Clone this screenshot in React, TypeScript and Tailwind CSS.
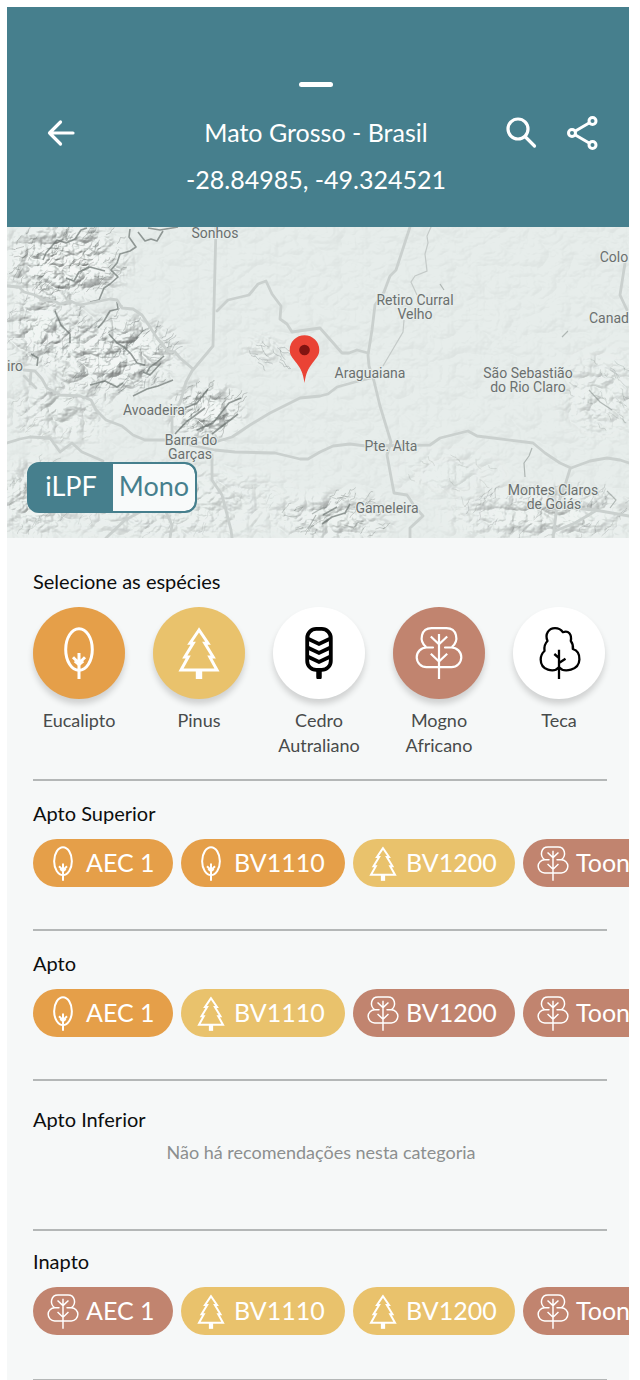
import type { ReactNode } from 'react';

type Species = 'eucalipto' | 'pinus' | 'cedro' | 'mogno' | 'teca';

const drawings: Record<Species, ReactNode> = {
  eucalipto: (
    <g strokeWidth="3">
      <ellipse cx="24" cy="22.500" rx="13.300" ry="20.800" />
      <path d="M24 26v26M18 30.200 24 36.200 30 30.200" />
      <path d="m19.500 34.500 4.500 3.700 4.500-3.700" strokeWidth="2" />
    </g>
  ),
  pinus: (
    <g strokeWidth="3">
      <path d="M24 3 15 16.200h3.200L9.800 30h3.400L6 43h36l-7.200-13h3.400l-8.400-13.800H33Z" />
      <path d="M20.800 43h6.400v9h-6.400z" fill="currentColor" stroke="none" />
    </g>
  ),
  cedro: (
    <g strokeWidth="3.800">
      <rect x="12.200" y="1.900" width="23.600" height="41" rx="9" />
      <path d="m12.500 11.500 11.500 5.500 11.500-5.500M12.500 20.500 24 26l11.500-5.500M12.500 29.500 24 35l11.500-5.500" />
      <path d="M24 44v6" strokeWidth="5.500" strokeLinecap="round" />
    </g>
  ),
  mogno: (
    <g strokeWidth="2.200">
      <path d="M18 20.500h-6.500a9.800 9.800 0 0 0 0 19.600h25a9.800 9.800 0 0 0 0-19.600H30" strokeLinecap="round" />
      <path d="M11.200 20.200C3.500 14 6 1.100 16.500 1.100h15c10.500 0 13 12.900 5.300 19.100" />
      <path d="M24 7v45M15.800 9.500 24 17.200l8.200-7.700M15.800 26.800 24 34.500l8.200-7.700" />
    </g>
  ),
  teca: (
    <g strokeWidth="2.300" strokeLinejoin="round">
      <path d="M24 40.200C19 46 5.700 43.500 5.700 32.500c0-4 1.500-6.500 3.800-8.500-.6-5 .4-7.500 3-10C9.500 7 14 1.200 20 1.200c3.500 0 6 1.300 7.800 4C33.500 3 37 7 35.800 14c2 2.500 2.500 5 2 8 5 1.500 6.800 6 6.600 10.500C44 43.500 29 46 24 40.200Z" />
      <path d="M24 22.700V52M19.300 27l4.700 4M30.500 31.800 24 36" />
    </g>
  ),
};

function TreeIcon({ kind, className }: { kind: Species; className: string }) {
  return (
    <svg viewBox="0 0 48 52" className={className} fill="none" stroke="currentColor" aria-hidden="true">
      {drawings[kind]}
    </svg>
  );
}

const tone: Record<Species, string> = {
  eucalipto: 'bg-[#e59f49] text-white',
  pinus: 'bg-[#e9c26c] text-white',
  cedro: 'bg-white text-black',
  mogno: 'bg-[#c1846f] text-white',
  teca: 'bg-white text-black',
};

const species: { kind: Species; label: string }[] = [
  { kind: 'eucalipto', label: 'Eucalipto' },
  { kind: 'pinus', label: 'Pinus' },
  { kind: 'cedro', label: 'Cedro Autraliano' },
  { kind: 'mogno', label: 'Mogno Africano' },
  { kind: 'teca', label: 'Teca' },
];

const names = ['AEC 1', 'BV1110', 'BV1200', 'Toona'];

const groups: { title: string; kinds: Species[]; pad: string }[] = [
  { title: 'Apto Superior', kinds: ['eucalipto', 'eucalipto', 'pinus', 'mogno'], pad: 'pt-[18px]' },
  { title: 'Apto', kinds: ['eucalipto', 'pinus', 'mogno', 'mogno'], pad: 'pt-[18px]' },
  { title: 'Apto Inferior', kinds: [], pad: 'pt-6' },
  { title: 'Inapto', kinds: ['mogno', 'pinus', 'pinus', 'mogno'], pad: 'pt-4' },
];

const roads = [
  'M7 286 19 287 24 292 35 295 43 300 52 300 60 304 70 301 80 305 110 299 117 300 122 308 133 309 142 315 150 327 157 338 167 350 175 352 180 358 193 369',
  'M216 227 213 346 192 371 186 382 180 403 172 414 172 436',
  'M217 311 228 300 249 295 258 284 266 281 272 294 281 306 280 319 287 324 292 332 320 328 342 353 349 353 357 350 368 353',
  'M410 227 396 270 390 276 384 292 375 305 372 330 368 355 369 366 374 381 380 406 391 442 387 455 394 493 407 495 415 507 423 516 410 528 410 538',
  'M24 370 35 371 42 379 47 388 60 395 80 396 91 400 96 410 106 420 122 426 133 435 145 440 165 440 215 450 235 452 275 453 300 459 308 459 320 452 333 446 350 444 366 446 430 445 440 438 468 431 477 436 533 443 545 453 560 463 571 468 590 461 607 458 620 460 629 463',
  'M215 442 232 437 250 425 270 413 300 398 320 396 328 394 337 387 355 382 371 378',
  'M7 443 20 439 30 437 50 438 60 452 72 443 82 452 103 461',
  'M212 455 212 480 222 495 231 530 232 538',
  'M625 263 620 295 627 310',
  'M570 469 566 482 557 507 553 538M557 507 595 510 629 516M597 510 575 523 555 531',
  'M106 538 125 520 140 512M166 512 172 525 170 538',
  'M24 376 36 388M31 372 30 384',
];

const ridges = [
  'M43 260 46 253 52 246 57 240 66 243 75 239 81 230 87 228',
  'M130 229 129 237 136 247 130 251 120 254 117 263 111 270 118 277 110 284 104 288 99 300 90 302',
  'M138 232 145 241 151 239 157 241 163 231M148 228 160 230 178 227',
  'M117 302 118 309 110 311 104 321 98 328',
  'M109 334 117 343 124 347 131 354 137 363 145 365',
  'M164 356 156 363 150 367 146 374M161 363 150 375 143 372',
  'M55 311 61 325 70 334 70 343M31 354 38 358 37 366',
  'M133 396 147 389 158 386 173 380M90 385 105 381 117 387 123 383',
  'M175 434 186 422 193 417 205 408M197 430 213 423 221 413 229 403 241 398M212 434 225 424 238 414',
  'M185 408 197 403 208 389M66 278 74 281 79 272 90 267 105 271',
  'M322 524 332 517 345 513 350 504M323 515 337 507',
];

const faintRidges = [
  'M525 477 524 463 529 456 532 448M308 529 316 515M312 514 324 507M607 491 616 500 610 508',
  'M562 337 568 331M589 390 600 402 612 410M444 290 440 284',
];

const patches = [
  { x: 65, y: 262, rx: 75, ry: 48, n: 95, tilt: -0.6, dark: 0.3, relief: 0.55 },
  { x: 42, y: 328, rx: 50, ry: 52, n: 40, tilt: -0.9, dark: 0.2, relief: 0.4 },
  { x: 115, y: 355, rx: 78, ry: 50, n: 85, tilt: -0.7, dark: 0.28, relief: 0.5 },
  { x: 60, y: 410, rx: 62, ry: 45, n: 24, tilt: -0.8, dark: 0.14, relief: 0.25 },
  { x: 206, y: 412, rx: 46, ry: 36, n: 50, tilt: -0.8, dark: 0.3, relief: 0.5 },
  { x: 35, y: 500, rx: 45, ry: 50, n: 35, tilt: -1, dark: 0.18, relief: 0.3 },
  { x: 170, y: 505, rx: 140, ry: 50, n: 30, tilt: -1, dark: 0.12, relief: 0.2 },
  { x: 265, y: 350, rx: 30, ry: 20, n: 14, tilt: 0.6, dark: 0.25, relief: 0.15 },
  { x: 335, y: 518, rx: 70, ry: 32, n: 45, tilt: -0.5, dark: 0.26, relief: 0.3 },
  { x: 450, y: 475, rx: 60, ry: 30, n: 12, tilt: 0.7, dark: 0.14, relief: 0.08 },
  { x: 545, y: 515, rx: 110, ry: 36, n: 55, tilt: -0.9, dark: 0.2, relief: 0.3 },
  { x: 600, y: 395, rx: 48, ry: 52, n: 25, tilt: 0.8, dark: 0.18, relief: 0.18 },
];

function hatch(seed: number, p: (typeof patches)[number]) {
  let s = seed * 7919 + 17;
  const rnd = () => {
    s = (s * 16807) % 2147483647;
    return s / 2147483647;
  };
  let d = '';
  for (let i = 0; i < p.n; i++) {
    const a = rnd() * Math.PI * 2;
    const r = Math.sqrt(rnd()) * 0.8;
    let x = p.x + Math.cos(a) * r * p.rx;
    let y = p.y + Math.sin(a) * r * p.ry;
    d += `M${x.toFixed(1)} ${y.toFixed(1)}`;
    for (let k = 0; k < 4; k++) {
      const t = p.tilt + (rnd() - 0.5) * 1.8;
      const len = 1 + rnd() * 4;
      x += Math.cos(t) * len;
      y += Math.sin(t) * len;
      d += `L${x.toFixed(1)} ${y.toFixed(1)}`;
    }
  }
  return d;
}

const places: [number, number, string][] = [
  [215, 238, 'Sonhos'],
  [415, 305, 'Retiro Curral'],
  [415, 319, 'Velho'],
  [370, 378, 'Araguaiana'],
  [528, 378, 'São Sebastião'],
  [528, 392, 'do Rio Claro'],
  [154, 415, 'Avoadeira'],
  [191, 445, 'Barra do'],
  [190, 459, 'Garças'],
  [391, 451, 'Pte. Alta'],
  [387, 513, 'Gameleira'],
  [553, 495, 'Montes Claros'],
  [554, 509, 'de Goiás'],
  [614, 262, 'Colo'],
  [609, 323, 'Canad'],
  [15, 371, 'iro'],
];

function RegionMap() {
  return (
    <svg viewBox="7 227 622 311" className="block w-full bg-[#e7edeb]" role="img" aria-label="Mapa da região">
      <defs>
        <filter id="relief" x="0" y="0" width="100%" height="100%" colorInterpolationFilters="sRGB">
          <feTurbulence type="turbulence" baseFrequency="0.035 0.045" numOctaves="4" seed="8" />
          <feDiffuseLighting surfaceScale="8" diffuseConstant="1.160" lightingColor="#f8fffc">
            <feDistantLight azimuth="225" elevation="62" />
          </feDiffuseLighting>
        </filter>
        <radialGradient id="fade">
          <stop offset="0.300" stopColor="#fff" />
          <stop offset="1" stopColor="#fff" stopOpacity="0" />
        </radialGradient>
        <mask id="hills" maskUnits="userSpaceOnUse" x="7" y="227" width="622" height="311" className="[mask-type:alpha]">
          <rect x="7" y="227" width="622" height="311" fill="#fff" opacity="0.040" />
          {patches.map((p, i) => (
            <ellipse key={i} cx={p.x} cy={p.y} rx={p.rx} ry={p.ry} fill="url(#fade)" opacity={p.relief} />
          ))}
        </mask>
      </defs>
      <g mask="url(#hills)">
        <rect x="7" y="227" width="622" height="311" filter="url(#relief)" />
      </g>
      <g fill="none" stroke="#4d5553" strokeWidth="0.900" strokeLinejoin="round">
        {patches.map((p, i) => (
          <path key={i} d={hatch(i + 1, p)} opacity={p.dark} />
        ))}
      </g>
      <g fill="none" stroke="#6b7371" strokeOpacity="0.700" strokeWidth="1.600" strokeLinejoin="round">
        {ridges.map((d) => (
          <path key={d} d={d} />
        ))}
      </g>
      <g fill="none" stroke="#8a9290" strokeOpacity="0.600" strokeWidth="1.200" strokeLinejoin="round">
        {faintRidges.map((d) => (
          <path key={d} d={d} />
        ))}
      </g>
      <g fill="none" stroke="#cad0ce" strokeWidth="2.800" strokeLinejoin="round" strokeLinecap="round">
        {roads.map((d) => (
          <path key={d} d={d} />
        ))}
      </g>
      <path
        d="M431 227 427 236 428 243 425 254 427 271 415 276 411 282 417 295M404 320 403 332 383 366"
        fill="none"
        stroke="#c4cac8"
        strokeWidth="1.200"
      />
      <g
        className="font-['Roboto',sans-serif] text-[14px]"
        fill="#6b706f"
        stroke="#e7edeb"
        strokeWidth="2"
        paintOrder="stroke"
        textAnchor="middle"
      >
        {places.map(([x, y, name]) => (
          <text key={name} x={x} y={y}>
            {name}
          </text>
        ))}
      </g>
      <path
        d="M304.500 383c-1.500-10-3.500-14-8-20-4-5-6.800-8-6.800-13a14.800 14.800 0 0 1 29.600 0c0 5-2.800 8-6.800 13-4.500 6-6.500 10-8 20Z"
        fill="#ea4335"
      />
      <circle cx="304.500" cy="350" r="5.300" fill="#811411" />
    </svg>
  );
}

const heading = "font-['Lato',sans-serif] text-[20px] leading-7 text-[#0c0e0e]";

export default function App() {
  return (
    <div className="min-h-screen bg-white pt-[7px] pr-[11px] pl-[7px] font-['Lato',sans-serif]">
      <div className="overflow-hidden bg-[#f6f8f8]">
        <header className="bg-[#467f8d] pt-[75px] pr-1 pb-7 text-white">
          <div className="mx-auto h-[5px] w-[34px] rounded-full bg-white" />
          <div className="mt-[26px] grid grid-cols-[1fr_auto_1fr] items-center px-[26px]">
            <button type="button" aria-label="Voltar" className="ml-3 w-8">
              <svg viewBox="0 0 32 38" className="w-8" fill="none" stroke="currentColor" strokeWidth="3.200" strokeLinecap="round" strokeLinejoin="round">
                <path d="M28 20H4.500M15.500 9 4.500 20l11 11" />
              </svg>
            </button>
            <h1 className="text-[25px] leading-[38px]">Mato Grosso - Brasil</h1>
            <div className="flex justify-end gap-[26px]">
              <button type="button" aria-label="Buscar">
                <svg viewBox="0 0 34 38" className="w-[34px]" fill="none" stroke="currentColor" strokeWidth="3.200" strokeLinecap="round">
                  <circle cx="13" cy="16" r="10" />
                  <path d="m20 23.500 9.500 9.500" />
                </svg>
              </button>
              <button type="button" aria-label="Compartilhar">
                <svg viewBox="0 0 34 38" className="w-[34px]" fill="none" stroke="currentColor" strokeWidth="3">
                  <circle cx="7" cy="20" r="3.500" />
                  <circle cx="27.500" cy="8" r="3.500" />
                  <circle cx="27.500" cy="32" r="3.500" />
                  <path d="m10 18.300 14.500-8.600M10 21.700l14.500 8.600" />
                </svg>
              </button>
            </div>
          </div>
          <p className="mt-[9px] mb-px text-center text-[25px] leading-[38px]">-28.84985, -49.324521</p>
        </header>

        <div className="relative">
          <RegionMap />
          <div className="absolute bottom-[25px] left-5 flex h-[51px] overflow-hidden rounded-xl border-2 border-[#467f8d] bg-[#467f8d] text-[27px] leading-[44px]">
            <button type="button" aria-pressed="true" className="w-[84px] pb-[3px] text-white">
              iLPF
            </button>
            <button type="button" aria-pressed="false" className="w-[82px] rounded-r-[10px] bg-[#f8fafa] pb-[3px] text-[#467f8d]">
              Mono
            </button>
          </div>
        </div>

        <main className="pt-[29px] pl-[26px]">
          <section className="pb-[21px]">
            <h2 className={heading}>Selecione as espécies</h2>
            <ul className="mt-3 flex justify-between pr-6">
              {species.map((s) => (
                <li key={s.kind}>
                  <button type="button" className="flex w-[92px] flex-col items-center">
                    <span className={`flex size-[92px] items-center justify-center rounded-full shadow-[0_5px_6px_rgba(0,0,0,0.16)] ${tone[s.kind]}`}>
                      <TreeIcon kind={s.kind} className="h-[52px] w-12" />
                    </span>
                    <span className="mt-[9px] text-[18px] leading-[25px] text-[#484b4b]">{s.label}</span>
                  </button>
                </li>
              ))}
            </ul>
          </section>

          {groups.map((g) => (
            <section key={g.title} className="min-h-[150px]">
              <div className="mr-[22px] border-t-2 border-[#b4b7b7]" />
              <div className={g.pad}>
                <h2 className={heading}>{g.title}</h2>
                {g.kinds.length === 0 ? (
                  <p className="mt-[7px] mr-5 text-center text-[18px] leading-6 text-[#8c8f8f]">
                    Não há recomendações nesta categoria
                  </p>
                ) : (
                  <ul className="mt-3 grid grid-cols-[140px_164px_162px_164px] gap-2">
                    {g.kinds.map((kind, i) => (
                      <li key={names[i]}>
                        <button
                          type="button"
                          className={`flex h-12 w-full items-center gap-[7px] rounded-full pl-[14px] text-[25px] ${tone[kind]}`}
                        >
                          <TreeIcon kind={kind} className="h-[35px] w-8" />
                          {names[i]}
                        </button>
                      </li>
                    ))}
                  </ul>
                )}
              </div>
            </section>
          ))}
          <div className="mr-[22px] border-t-2 border-[#b4b7b7]" />
        </main>
      </div>
    </div>
  );
}
